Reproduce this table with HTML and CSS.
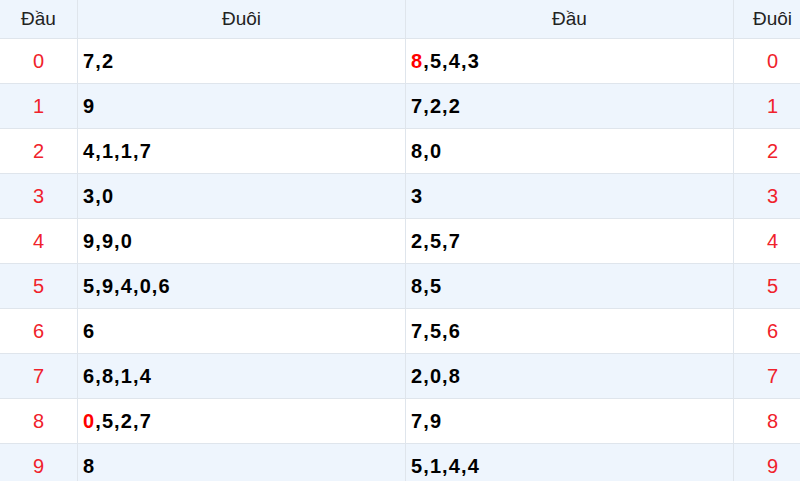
FILE: index.html
```html
<!DOCTYPE html>
<html lang="vi">
<head>
<meta charset="utf-8">
<title>Đầu Đuôi</title>
<link rel="stylesheet" href="styles.css">
</head>
<body>
<div class="wrap">
<table class="lt">
  <thead>
    <tr><th class="c-side">Đầu</th><th class="c-mid">Đuôi</th><th class="c-mid">Đầu</th><th class="c-side">Đuôi</th></tr>
  </thead>
  <tbody>
    <tr><td class="n">0</td><td class="v">7,2</td><td class="v"><span class="hl">8</span>,5,4,3</td><td class="n">0</td></tr>
    <tr><td class="n">1</td><td class="v">9</td><td class="v">7,2,2</td><td class="n">1</td></tr>
    <tr><td class="n">2</td><td class="v">4,1,1,7</td><td class="v">8,0</td><td class="n">2</td></tr>
    <tr><td class="n">3</td><td class="v">3,0</td><td class="v">3</td><td class="n">3</td></tr>
    <tr><td class="n">4</td><td class="v">9,9,0</td><td class="v">2,5,7</td><td class="n">4</td></tr>
    <tr><td class="n">5</td><td class="v">5,9,4,0,6</td><td class="v">8,5</td><td class="n">5</td></tr>
    <tr><td class="n">6</td><td class="v">6</td><td class="v">7,5,6</td><td class="n">6</td></tr>
    <tr><td class="n">7</td><td class="v">6,8,1,4</td><td class="v">2,0,8</td><td class="n">7</td></tr>
    <tr><td class="n">8</td><td class="v"><span class="hl">0</span>,5,2,7</td><td class="v">7,9</td><td class="n">8</td></tr>
    <tr><td class="n">9</td><td class="v">8</td><td class="v">5,1,4,4</td><td class="n">9</td></tr>
  </tbody>
</table>
</div>
</body>
</html>
```
FILE: styles.css
```css
html, body {
  margin: 0;
  padding: 0;
  background: #fff;
}
.wrap {
  width: 800px;
  height: 481px;
  overflow: hidden;
}
.lt {
  width: 808px;
  border-collapse: collapse;
  table-layout: fixed;
  font-family: "Liberation Sans", Arial, sans-serif;
}
.c-side { width: 77px; }
.c-mid { width: 327px; }
.lt th {
  height: 38px;
  padding: 0;
  background: #eef5fd;
  color: #222;
  font-weight: normal;
  font-size: 19px;
  text-align: center;
  border: 1px solid #dfe5ec;
  border-top: none;
}
.lt th:first-child, .lt td:first-child { border-left: none; }
.lt td {
  height: 43px;
  padding: 1px 0 0 5px;
  border: 1px solid #dfe5ec;
  font-size: 20px;
  vertical-align: middle;
}
.lt tbody tr:nth-child(even) td { background: #eef5fd; }
.lt td.n {
  color: #f0222b;
  text-align: center;
  padding: 1px 0 0 0;
}
.lt td.v {
  color: #000;
  font-weight: bold;
  text-align: left;
  letter-spacing: 1.1px;
}
.hl { color: #ff0000; }
```
